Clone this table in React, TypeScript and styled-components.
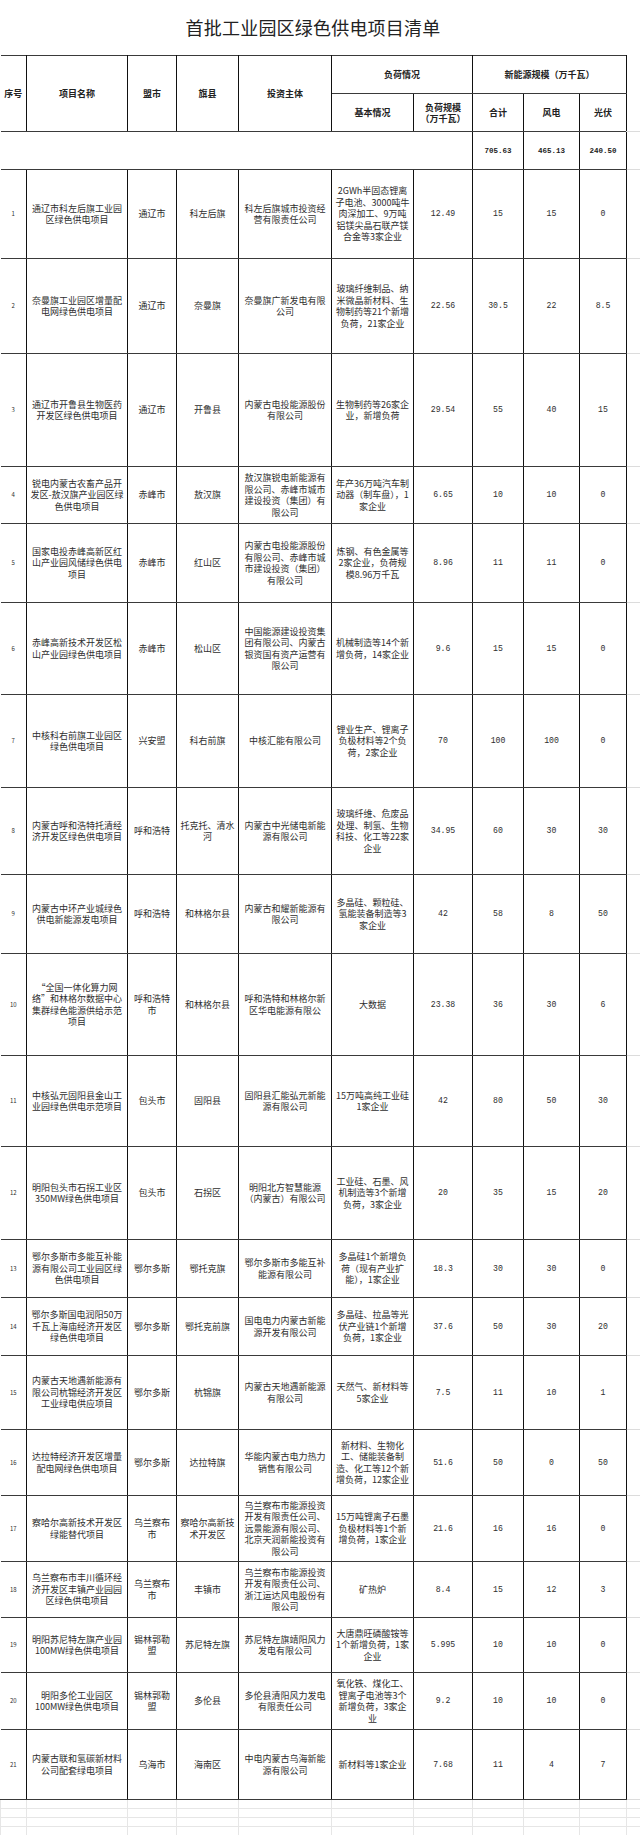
import React from "react";
import styled, { createGlobalStyle } from "styled-components";

const GlobalStyle = createGlobalStyle`
  body {
    margin: 0;
    background: #fff;
    font-family: "Noto Sans CJK SC", "Noto Sans", sans-serif;
    color: #2a2a2a;
  }
`;

type Project = {
  no: number;
  name: string;
  city: string;
  county: string;
  investor: string;
  basic: string;
  load: string;
  total: string;
  wind: string;
  solar: string;
  h: number;
};

const projects: Project[] = [
  { no: 1, name: "通辽市科左后旗工业园区绿色供电项目", city: "通辽市", county: "科左后旗", investor: "科左后旗城市投资经营有限责任公司", basic: "2GWh半固态锂离子电池、3000吨牛肉深加工、9万吨铝镁尖晶石联产镁合金等3家企业", load: "12.49", total: "15", wind: "15", solar: "0", h: 89 },
  { no: 2, name: "奈曼旗工业园区增量配电网绿色供电项目", city: "通辽市", county: "奈曼旗", investor: "奈曼旗广新发电有限公司", basic: "玻璃纤维制品、纳米微晶新材料、生物制药等21个新增负荷，21家企业", load: "22.56", total: "30.5", wind: "22", solar: "8.5", h: 95 },
  { no: 3, name: "通辽市开鲁县生物医药开发区绿色供电项目", city: "通辽市", county: "开鲁县", investor: "内蒙古电投能源股份有限公司", basic: "生物制药等26家企业，新增负荷", load: "29.54", total: "55", wind: "40", solar: "15", h: 113 },
  { no: 4, name: "锐电内蒙古农畜产品开发区-敖汉旗产业园区绿色供电项目", city: "赤峰市", county: "敖汉旗", investor: "敖汉旗锐电新能源有限公司、赤峰市城市建设投资（集团）有限公司", basic: "年产36万吨汽车制动器（制车盘），1家企业", load: "6.65", total: "10", wind: "10", solar: "0", h: 57 },
  { no: 5, name: "国家电投赤峰高新区红山产业园风储绿色供电项目", city: "赤峰市", county: "红山区", investor: "内蒙古电投能源股份有限公司、赤峰市城市建设投资（集团）有限公司", basic: "炼钢、有色金属等2家企业，负荷规模8.96万千瓦", load: "8.96", total: "11", wind: "11", solar: "0", h: 79 },
  { no: 6, name: "赤峰高新技术开发区松山产业园绿色供电项目", city: "赤峰市", county: "松山区", investor: "中国能源建设投资集团有限公司、内蒙古银资国有资产运营有限公司", basic: "机械制造等14个新增负荷，14家企业", load: "9.6", total: "15", wind: "15", solar: "0", h: 92 },
  { no: 7, name: "中核科右前旗工业园区绿色供电项目", city: "兴安盟", county: "科右前旗", investor: "中核汇能有限公司", basic: "锂业生产、锂离子负极材料等2个负荷，2家企业", load: "70", total: "100", wind: "100", solar: "0", h: 93 },
  { no: 8, name: "内蒙古呼和浩特托清经济开发区绿色供电项目", city: "呼和浩特", county: "托克托、清水河", investor: "内蒙古中光储电新能源有限公司", basic: "玻璃纤维、危废品处理、制氢、生物科技、化工等22家企业", load: "34.95", total: "60", wind: "30", solar: "30", h: 87 },
  { no: 9, name: "内蒙古中环产业城绿色供电新能源发电项目", city: "呼和浩特", county: "和林格尔县", investor: "内蒙古和耀新能源有限公司", basic: "多晶硅、颗粒硅、氢能装备制造等3家企业", load: "42", total: "58", wind: "8", solar: "50", h: 79 },
  { no: 10, name: "“全国一体化算力网络”和林格尔数据中心集群绿色能源供给示范项目", city: "呼和浩特市", county: "和林格尔县", investor: "呼和浩特和林格尔新区华电能源有限公", basic: "大数据", load: "23.38", total: "36", wind: "30", solar: "6", h: 102 },
  { no: 11, name: "中核弘元固阳县金山工业园绿色供电示范项目", city: "包头市", county: "固阳县", investor: "固阳县汇能弘元新能源有限公司", basic: "15万吨高纯工业硅1家企业", load: "42", total: "80", wind: "50", solar: "30", h: 91 },
  { no: 12, name: "明阳包头市石拐工业区350MW绿色供电项目", city: "包头市", county: "石拐区", investor: "明阳北方智慧能源（内蒙古）有限公司", basic: "工业硅、石墨、风机制造等3个新增负荷，3家企业", load: "20", total: "35", wind: "15", solar: "20", h: 93 },
  { no: 13, name: "鄂尔多斯市多能互补能源有限公司工业园区绿色供电项目", city: "鄂尔多斯", county: "鄂托克旗", investor: "鄂尔多斯市多能互补能源有限公司", basic: "多晶硅1个新增负荷（现有产业扩能），1家企业", load: "18.3", total: "30", wind: "30", solar: "0", h: 58 },
  { no: 14, name: "鄂尔多斯国电润阳50万千瓦上海庙经济开发区绿色供电项目", city: "鄂尔多斯", county: "鄂托克前旗", investor: "国电电力内蒙古新能源开发有限公司", basic: "多晶硅、拉晶等光伏产业链1个新增负荷，1家企业", load: "37.6", total: "50", wind: "30", solar: "20", h: 58 },
  { no: 15, name: "内蒙古天地遇新能源有限公司杭锦经济开发区工业绿电供应项目", city: "鄂尔多斯", county: "杭锦旗", investor: "内蒙古天地遇新能源有限公司", basic: "天然气、新材料等5家企业", load: "7.5", total: "11", wind: "10", solar: "1", h: 74 },
  { no: 16, name: "达拉特经济开发区增量配电网绿色供电项目", city: "鄂尔多斯", county: "达拉特旗", investor: "华能内蒙古电力热力销售有限公司", basic: "新材料、生物化工、储能装备制造、化工等12个新增负荷，12家企业", load: "51.6", total: "50", wind: "0", solar: "50", h: 66 },
  { no: 17, name: "察哈尔高新技术开发区绿能替代项目", city: "乌兰察布市", county: "察哈尔高新技术开发区", investor: "乌兰察布市能源投资开发有限责任公司、远景能源有限公司、北京天润新能投资有限公司", basic: "15万吨锂离子石墨负极材料等1个新增负荷，1家企业", load: "21.6", total: "16", wind: "16", solar: "0", h: 66 },
  { no: 18, name: "乌兰察布市丰川循环经济开发区丰镇产业园园区绿色供电项目", city: "乌兰察布市", county: "丰镇市", investor: "乌兰察布市能源投资开发有限责任公司、浙江运达风电股份有限公司", basic: "矿热炉", load: "8.4", total: "15", wind: "12", solar: "3", h: 56 },
  { no: 19, name: "明阳苏尼特左旗产业园100MW绿色供电项目", city: "锡林郭勒盟", county: "苏尼特左旗", investor: "苏尼特左旗靖阳风力发电有限公司", basic: "大唐鼎旺磷酸铵等1个新增负荷，1家企业", load: "5.995", total: "10", wind: "10", solar: "0", h: 55 },
  { no: 20, name: "明阳多伦工业园区100MW绿色供电项目", city: "锡林郭勒盟", county: "多伦县", investor: "多伦县清阳风力发电有限责任公司", basic: "氧化铁、煤化工、锂离子电池等3个新增负荷，3家企业", load: "9.2", total: "10", wind: "10", solar: "0", h: 57 },
  { no: 21, name: "内蒙古联和氢碳新材料公司配套绿电项目", city: "乌海市", county: "海南区", investor: "中电内蒙古乌海新能源有限公司", basic: "新材料等1家企业", load: "7.68", total: "11", wind: "4", solar: "7", h: 70 },
];

const colWidths = [26, 101, 49, 62, 93, 82, 59, 51, 56, 47, 14];

const Page = styled.div`
  width: 640px;
`;

const Title = styled.h1`
  margin: 0;
  width: 626px;
  height: 55px;
  display: flex;
  align-items: center;
  justify-content: center;
  padding-bottom: 2px;
  box-sizing: border-box;
  font-size: 18px;
  font-weight: 400;
  color: #222;
  letter-spacing: 0.2px;
`;

const Sheet = styled.table`
  border-collapse: collapse;
  table-layout: fixed;
  width: 640px;
`;

const Row = styled.tr<{ $h: number }>`
  height: ${({ $h }) => $h}px;
`;

const HeadCell = styled.th<{ $edge?: boolean }>`
  padding: 0 3px;
  font-size: 9px;
  line-height: 11px;
  font-weight: 700;
  color: #222;
  text-align: center;
  vertical-align: middle;
  border-top: 1px solid #3a3a3a;
  border-bottom: 1px solid #3a3a3a;
  border-left: ${({ $edge }) => ($edge ? "none" : "1px solid #111")};
  border-right: 1px solid #111;
`;

const Cell = styled.td<{ $kind?: "num" | "no" | "text"; $edge?: boolean }>`
  padding: 0 ${({ $kind }) => ($kind === "no" ? 0 : 3)}px;
  font-size: ${({ $kind }) => ($kind === "no" ? 6 : $kind === "num" ? 8.2 : 9)}px;
  line-height: 11.5px;
  font-family: ${({ $kind }) =>
    $kind === "num" ? '"Liberation Mono", "DejaVu Sans Mono", monospace' : 'inherit'};
  color: #2e2e2e;
  text-align: center;
  vertical-align: middle;
  border-top: 1px solid #3a3a3a;
  border-bottom: 1px solid #3a3a3a;
  border-left: ${({ $edge }) => ($edge ? "none" : "1px solid #111")};
  border-right: 1px solid #111;
`;

const SumCell = styled.td`
  padding: 0;
  font-size: 7.5px;
  font-weight: 700;
  font-family: "Liberation Mono", "DejaVu Sans Mono", monospace;
  color: #222;
  text-align: center;
  vertical-align: middle;
  border: 1px solid #3a3a3a;
  border-left: 1px solid #111;
  border-right: 1px solid #111;
`;

const BlankCell = styled.td`
  padding: 0;
  border-top: 1px solid #3a3a3a;
  border-bottom: 1px solid #3a3a3a;
  border-left: none;
  border-right: 1px solid #111;
`;

const Gutter = styled.td`
  padding: 0;
  border: none;
  border-bottom: 1px solid #dcdcdc;
`;

const GridCell = styled.td`
  padding: 0;
  border: 1px solid #e6e6e6;
  border-top: none;
`;

const App: React.FC = () => {
  return (
    <Page>
      <GlobalStyle />
      <Title>首批工业园区绿色供电项目清单</Title>
      <Sheet>
        <colgroup>
          {colWidths.map((w, i) => (
            <col key={i} style={{ width: w }} />
          ))}
        </colgroup>
        <thead>
          <Row $h={38}>
            <HeadCell rowSpan={2} $edge>序号</HeadCell>
            <HeadCell rowSpan={2}>项目名称</HeadCell>
            <HeadCell rowSpan={2}>盟市</HeadCell>
            <HeadCell rowSpan={2}>旗县</HeadCell>
            <HeadCell rowSpan={2}>投资主体</HeadCell>
            <HeadCell colSpan={2}>负荷情况</HeadCell>
            <HeadCell colSpan={3}>新能源规模（万千瓦）</HeadCell>
            <Gutter rowSpan={2} />
          </Row>
          <Row $h={38}>
            <HeadCell>基本情况</HeadCell>
            <HeadCell>负荷规模（万千瓦）</HeadCell>
            <HeadCell>合计</HeadCell>
            <HeadCell>风电</HeadCell>
            <HeadCell>光伏</HeadCell>
          </Row>
        </thead>
        <tbody>
          <Row $h={38}>
            <BlankCell colSpan={7} />
            <SumCell>705.63</SumCell>
            <SumCell>465.13</SumCell>
            <SumCell>240.50</SumCell>
            <Gutter />
          </Row>
          {projects.map((p) => (
            <Row key={p.no} $h={p.h}>
              <Cell $kind="no" $edge>{p.no}</Cell>
              <Cell>{p.name}</Cell>
              <Cell>{p.city}</Cell>
              <Cell>{p.county}</Cell>
              <Cell>{p.investor}</Cell>
              <Cell>{p.basic}</Cell>
              <Cell $kind="num">{p.load}</Cell>
              <Cell $kind="num">{p.total}</Cell>
              <Cell $kind="num">{p.wind}</Cell>
              <Cell $kind="num">{p.solar}</Cell>
              <Gutter />
            </Row>
          ))}
          {[0, 1, 2, 3].map((i) => (
            <Row key={`g${i}`} $h={9}>
              {colWidths.map((_, j) => (
                <GridCell key={j} />
              ))}
            </Row>
          ))}
        </tbody>
      </Sheet>
    </Page>
  );
};

export default App;
